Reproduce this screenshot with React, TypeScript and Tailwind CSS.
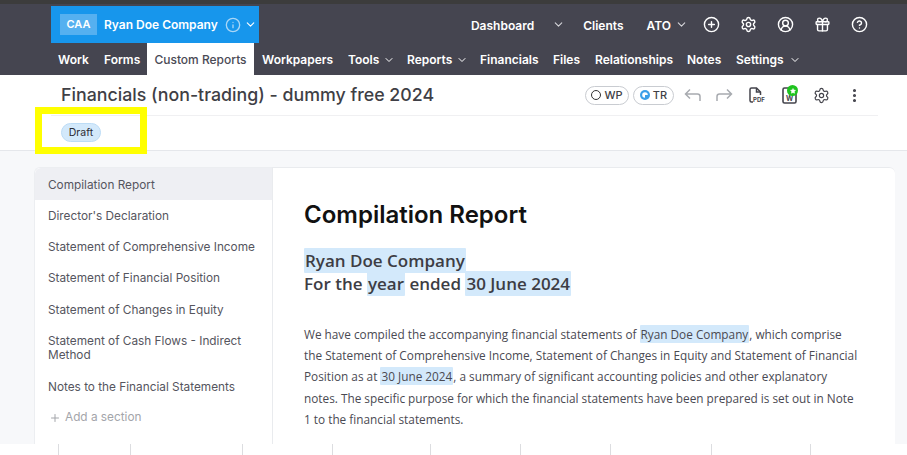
import { ChevronDown, CircleHelp, CirclePlus, CircleUserRound, Gift, Info, Plus, Settings, EllipsisVertical, Star } from 'lucide-react'

const inter = "font-['Inter',sans-serif]"
const openSans = "font-['Open_Sans',sans-serif]"

const sections = [
  { label: 'Director\'s Declaration', cls: 'h-[31px]' },
  { label: 'Statement of Comprehensive Income', cls: 'h-[31px]' },
  { label: 'Statement of Financial Position', cls: 'h-[32px]' },
  { label: 'Statement of Changes in Equity', cls: 'h-[32px]' },
  { label: 'Statement of Cash Flows - Indirect Method', cls: 'h-[45px] pb-[2px]' },
  { label: 'Notes to the Financial Statements', cls: 'h-[31px]' },
]

const ticks = ['w-[59px]', 'w-[72px]', 'w-[112px]', 'w-[90px]', 'w-[98px]', 'w-[90px]', 'w-[90px]', 'w-[101px]', 'w-[99px]']

function Mark({ children }: { children: React.ReactNode }) {
  return <span className="bg-[#d3e9fb] rounded-[1px] px-[1px] py-[1px]">{children}</span>
}

function TopNavIcons() {
  return (
    <div className="flex items-center gap-[20px] text-white">
      <CirclePlus size={17} strokeWidth={2} />
      <Settings size={17} strokeWidth={2} />
      <CircleUserRound size={17} strokeWidth={2} />
      <Gift size={17} strokeWidth={2} />
      <CircleHelp size={17} strokeWidth={2} />
    </div>
  )
}

function MainNav() {
  return (
    <div className="flex items-end h-[32px] pl-[51px] text-[12px] font-semibold text-white">
      <span className="pl-[7px] pt-[2px] h-full flex items-center w-[53px]">Work</span>
      <span className="pt-[2px] h-full flex items-center w-[43px]">Forms</span>
      <span className="bg-white text-[#4a4a55] font-medium pt-[2px] h-full flex items-center justify-center w-[107px]">Custom Reports</span>
      <span className="pl-[8px] pt-[2px] h-full flex items-center w-[94px]">Workpapers</span>
      <span className="pt-[2px] h-full flex items-center gap-[4px] w-[59px]">Tools <ChevronDown size={12} /></span>
      <span className="pt-[2px] h-full flex items-center gap-[4px] w-[73px]">Reports <ChevronDown size={12} /></span>
      <span className="pt-[2px] h-full flex items-center w-[73px]">Financials</span>
      <span className="pt-[2px] h-full flex items-center w-[42px]">Files</span>
      <span className="pt-[2px] h-full flex items-center w-[92px]">Relationships</span>
      <span className="pt-[2px] h-full flex items-center w-[49px]">Notes</span>
      <span className="pt-[2px] h-full flex items-center gap-[5px]">Settings <ChevronDown size={12} /></span>
    </div>
  )
}

export default function App() {
  return (
    <div className={`${inter} relative w-[907px] h-[455px] overflow-hidden bg-white flex flex-col`}>
      {/* Header */}
      <header className="bg-[#454550] border-t-4 border-[#3c3c3c] h-[75px] shrink-0 flex flex-col">
        <div className="h-[39px] flex pt-[2px] pr-[39px] justify-between">
          <div className="ml-[51px] w-[208px] h-[37px] bg-[#1796ec] flex items-center pl-[9px] text-white">
            <span className="w-[37px] h-[21px] bg-[#55b0f0] flex items-center justify-center text-[11px] font-semibold">CAA</span>
            <span className="ml-[7px] text-[12px] font-semibold whitespace-nowrap mt-[1px]">Ryan Doe Company</span>
            <Info size={16} className="ml-[7px] text-[#a9d6f6] shrink-0" />
            <ChevronDown size={13} className="ml-[3px] shrink-0" />
          </div>
          <div className="flex items-center text-[12px] font-semibold text-white">
            <span className="mt-[2px]">Dashboard</span>
            <ChevronDown size={13} className="ml-[18px] text-[#d5d5d9]" />
            <span className="ml-[18px] mt-[2px]">Clients</span>
            <span className="ml-[23px] mt-[2px]">ATO</span>
            <ChevronDown size={13} className="ml-[4px] text-[#d5d5d9]" />
            <div className="ml-[15px]"><TopNavIcons /></div>
          </div>
        </div>
        <MainNav />
      </header>

      {/* Title bar */}
      <div className="h-[76px] shrink-0 border-b border-[#e5e7eb]">
        <div className="h-[41px] ml-[51px] mr-[29px] border-b border-[#f0f0f2] flex items-center justify-between pl-[10px] pr-[15px]">
          <h1 className="text-[17.8px] font-medium text-[#3f3f46] mt-[1px]">Financials (non-trading) - dummy free 2024</h1>
          <div className="flex items-center">
            <span className="h-[19px] w-[44px] rounded-full border border-[#c9ccd1] flex items-center justify-center gap-[3px] text-[11px] font-medium text-[#3f3f46]">
              <span className="w-[10px] h-[10px] rounded-full border border-[#333]" />WP
            </span>
            <span className="ml-[4px] h-[19px] w-[41px] rounded-full border border-[#c9ccd1] flex items-center justify-center gap-[3px] text-[11px] font-medium text-[#3f3f46]">
              <svg width="10" height="10" viewBox="0 0 10 10"><circle cx="5" cy="5" r="5" fill="#3b9fe8" /><path d="M5 2.2A2.8 2.8 0 1 1 2.2 5H5z" fill="#fff" transform="rotate(180 5 5)" /></svg>TR
            </span>
            <svg width="18" height="18" viewBox="0 0 18 18" fill="none" stroke="#a8abb0" strokeWidth="1.5" className="ml-[10px]">
              <path d="M6 3.5 1.5 8 6 12.5M1.5 8h12a2.5 2.5 0 0 1 2.5 2.5V15" />
            </svg>
            <svg width="18" height="18" viewBox="0 0 18 18" fill="none" stroke="#a8abb0" strokeWidth="1.5" className="ml-[13px]">
              <path d="M12 3.5 16.5 8 12 12.5M16.5 8h-12A2.5 2.5 0 0 0 2 10.500V15" />
            </svg>
            <div className="relative ml-[15px] w-[18px] h-[18px] text-[#44444c]">
              <svg width="18" height="18" viewBox="0 0 18 18" fill="none" stroke="currentColor" strokeWidth="1.5">
                <path d="M5 16H3.500A1.500 1.500 0 0 1 2 14.500v-11A1.500 1.500 0 0 1 3.500 2h5l4 4v3" />
                <path d="M8.500 2v4h4" />
              </svg>
              <span className="absolute left-[5px] top-[10px] text-[6px] leading-[7px] font-bold">PDF</span>
            </div>
            <div className="relative ml-[15px] w-[18px] h-[18px] text-[#44444c]">
              <svg width="18" height="18" viewBox="0 0 18 18" fill="none" stroke="currentColor" strokeWidth="1.6">
                <rect x="2" y="2" width="13" height="15" rx="1.500" />
              </svg>
              <span className="absolute left-[5px] top-[9px] text-[7px] leading-[7px] font-bold">W</span>
              <span className="absolute -top-[1px] left-[6px] w-[11px] h-[11px] rounded-full bg-[#1fc41f] flex items-center justify-center">
                <Star size={6} fill="white" stroke="white" />
              </span>
            </div>
            <Settings size={17} strokeWidth={1.7} className="ml-[14px] text-[#44444c]" />
            <EllipsisVertical size={17} strokeWidth={2.4} className="ml-[16px] text-[#44444c]" />
          </div>
        </div>
        <div className="flex pl-[61px] pt-[7px]">
          <span className="flex items-center justify-center w-[40px] h-[19px] rounded-full bg-[#d3e9fb] border border-[#bcdcf6] text-[10.5px] text-[#2b2b33]">Draft</span>
        </div>
      </div>

      {/* Body */}
      <main className="h-[293px] shrink-0 bg-[#f7f8fa] pt-[16px] pl-[34px] pr-[12px] flex">
        <aside className="w-[238px] shrink-0 bg-white border-l border-t border-[#eceef1] rounded-tl-[6px] text-[11.8px] text-[#55555e]">
          <div className="h-[32px] bg-[#eeeff3] pl-[13px] pt-[3px] flex items-center rounded-tl-[6px]">Compilation Report</div>
          {sections.map((s) => (
            <div key={s.label} className={`${s.cls} pl-[13px] pr-[10px] flex items-center leading-[14px]`}>{s.label}</div>
          ))}
          <div className="h-[31px] pl-[14px] flex items-center gap-[4px] text-[#a3a5aa]">
            <Plus size={12} /> Add a section
          </div>
        </aside>
        <section className="flex-1 bg-white border-l border-t border-[#e9ebee] rounded-tr-[6px] pl-[31px] pr-[35px]">
          <h2 className="mt-[32px] text-[24px] leading-[30px] font-semibold text-[#111]">Compilation Report</h2>
          <div className={`${openSans} mt-[19px] text-[17px] leading-[23px] font-semibold text-[#3d3d44]`}>
            <div><Mark>Ryan Doe Company</Mark></div>
            <div>For the <Mark>year</Mark> ended <Mark>30 June 2024</Mark></div>
          </div>
          <p className={`${openSans} mt-[29px] text-[11.8px] leading-[21.2px] text-[#4a4a52]`}>
            We have compiled the accompanying financial statements of <Mark>Ryan Doe Company</Mark>, which comprise the Statement of Comprehensive Income, Statement of Changes in Equity and Statement of Financial Position as at <Mark>30 June 2024</Mark>, a summary of significant accounting policies and other explanatory notes. The specific purpose for which the financial statements have been prepared is set out in Note 1 to the financial statements.
          </p>
        </section>
      </main>

      {/* Bottom ticks */}
      <div className="h-[11px] flex">
        {ticks.map((w, i) => (
          <div key={i} className={`${w} shrink-0 border-r border-[#dcdde0]`} />
        ))}
      </div>

      {/* Yellow annotation */}
      <div className="absolute left-[35px] top-[107px] w-[112px] h-[47px] border-[7px] border-[#ffff00]" />
    </div>
  )
}
